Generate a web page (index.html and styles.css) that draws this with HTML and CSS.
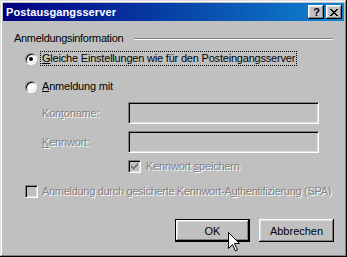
FILE: index.html
```html
<!DOCTYPE html>
<html>
<head>
    <title>Postausgangsserver</title>
    <meta charset="UTF-8">
    <link rel="stylesheet" href="styles.css">
</head>
<body>
    <div class="window">
        <div class="titlebar">
            <span class="title">Postausgangsserver</span>
            <div class="title-buttons">
                <span class="tbtn help">?</span>
                <span class="tbtn close">
                    <svg width="8" height="7" viewBox="0 0 8 7" shape-rendering="crispEdges">
                        <path d="M0 0h2v1h-2zM6 0h2v1h-2zM1 1h2v1h-2zM5 1h2v1h-2zM2 2h4v1h-4zM3 3h2v1h-2zM2 4h4v1h-4zM1 5h2v1h-2zM5 5h2v1h-2zM0 6h2v1h-2zM6 6h2v1h-2z" fill="#000"/>
                    </svg>
                </span>
            </div>
        </div>

        <div class="content">
            <div class="group-head">
                <span>Anmeldungsinformation</span>
                <div class="etch"></div>
            </div>

            <div class="option option-first">
                <span class="radio checked"></span>
                <span class="focus"><u>G</u>leiche Einstellungen wie für den Posteingangsserver</span>
            </div>
            <div class="option option-second">
                <span class="radio"></span>
                <span class="option-text"><u>A</u>nmeldung mit</span>
            </div>

            <div class="field-row field-first">
                <span class="field-label disabled">Kon<u>t</u>oname:</span>
                <div class="textbox"></div>
            </div>
            <div class="field-row field-second">
                <span class="field-label disabled"><u>K</u>ennwort:</span>
                <div class="textbox"></div>
            </div>

            <div class="check-row check-save">
                <span class="checkbox">
                    <svg width="7" height="7" viewBox="0 0 7 7" shape-rendering="crispEdges">
                        <path d="M6 0h1v3h-1zM5 1h1v3h-1zM4 2h1v3h-1zM3 3h1v3h-1zM2 4h1v3h-1zM1 3h1v3h-1zM0 2h1v3h-1z" fill="#808080"/>
                    </svg>
                </span>
                <span class="disabled">Kennwort <u>s</u>peichern</span>
            </div>
            <div class="check-row check-spa">
                <span class="checkbox"></span>
                <span class="disabled">Anmeldung durch gesicherte Kennwort-A<u>u</u>thentifizierung (SPA)</span>
            </div>

            <div class="buttons">
                <button class="btn btn-default">OK</button>
                <button class="btn">Abbrechen</button>
            </div>
        </div>

        <svg class="cursor" width="12" height="20" viewBox="0 0 12 20">
            <path d="M0.5 0.5 L0.5 16.5 L4.5 12.5 L7.5 19 L9.5 18 L6.5 11.5 L11.5 11.5 Z" fill="#fff" stroke="#000" stroke-width="1"/>
        </svg>
    </div>
</body>
</html>
```

FILE: styles.css
```css
* { margin: 0; padding: 0; box-sizing: border-box; }
body { font-family: 'Liberation Sans', Arial, sans-serif; font-size: 11px; background: #c0c0c0; color: #000; }

.window { position: relative; width: 347px; height: 257px; padding: 3px; background: #c0c0c0; white-space: nowrap;
    box-shadow: inset -1px -1px #000, inset 1px 1px #dfdfdf, inset -2px -2px #808080, inset 2px 2px #fff; }

.titlebar { height: 18px; display: flex; align-items: center; justify-content: space-between; padding: 0 2px 0 3px;
    background: linear-gradient(to right, #000080, #1084d0); }
.title { color: #fff; font-weight: bold; font-size: 11px; letter-spacing: 0.1px; }
.title-buttons { display: flex; gap: 2px; }
.tbtn { width: 16px; height: 14px; display: flex; align-items: center; justify-content: center; background: #c0c0c0;
    box-shadow: inset -1px -1px #000, inset 1px 1px #fff, inset -2px -2px #808080, inset 2px 2px #dfdfdf; }
.help { font-weight: bold; font-size: 11px; line-height: 14px; padding-left: 1px; }
.close svg { display: block; }

.content { display: flex; flex-direction: column; padding: 11px 10px 0 11px; }

.group-head { display: flex; align-items: center; height: 13px; line-height: 13px; letter-spacing: -0.3px; }
.etch { flex: 1; height: 2px; margin: 1px 1px 0 11px; border-top: 1px solid #808080; border-bottom: 1px solid #fff; }

.option { display: flex; align-items: center; height: 15px; padding-left: 11px; line-height: 13px; letter-spacing: -0.2px; }
.option-first { margin-top: 6px; }
.option-second { margin-top: 13px; }
.focus { margin-left: 3px; padding: 0 1px; border: 1px dotted #000; }
.option-text { margin-left: 5px; }

.radio { position: relative; width: 12px; height: 12px; flex: none; border-radius: 50%; background: #fff;
    border: 1px solid; border-color: #808080 #fff #fff #808080;
    box-shadow: inset 1px 1px #000, inset -1px -1px #dfdfdf; }
.radio.checked::after { content: ''; position: absolute; left: 3px; top: 3px; width: 4px; height: 4px; border-radius: 50%; background: #000; }

.field-row { display: flex; align-items: center; height: 22px; padding-left: 28px; }
.field-first { margin-top: 8px; }
.field-second { margin-top: 7px; }
.field-label { width: 86px; letter-spacing: -0.2px; }
.textbox { width: 191px; height: 22px; background: #c0c0c0;
    border: 1px solid; border-color: #808080 #fff #fff #808080;
    box-shadow: inset 1px 1px #000, inset -1px -1px #dfdfdf; }

.disabled { color: #808080; text-shadow: 1px 1px 0 #fff; }

.check-row { display: flex; align-items: center; height: 13px; line-height: 13px; letter-spacing: -0.2px; }
.check-save { margin-top: 7px; padding-left: 114px; gap: 5px; }
.check-spa { margin-top: 12px; padding-left: 11px; gap: 4px; letter-spacing: -0.3px; }
.checkbox { width: 13px; height: 13px; flex: none; display: flex; align-items: center; justify-content: center; background: #c0c0c0;
    border: 1px solid; border-color: #808080 #fff #fff #808080;
    box-shadow: inset 1px 1px #000, inset -1px -1px #dfdfdf; }
.checkbox svg { display: block; }

.buttons { display: flex; justify-content: flex-end; gap: 9px; margin-top: 21px; }
.btn { width: 75px; height: 23px; font-family: 'Liberation Sans', Arial, sans-serif; font-size: 11px; color: #000;
    background: #c0c0c0; border: none;
    box-shadow: inset -1px -1px #000, inset 1px 1px #fff, inset -2px -2px #808080, inset 2px 2px #dfdfdf; }
.btn-default { border: 1px solid #000;
    box-shadow: inset -1px -1px #000, inset 1px 1px #fff, inset -2px -2px #808080, inset 2px 2px #dfdfdf; }

.cursor { position: absolute; left: 228px; top: 232px; }
```
